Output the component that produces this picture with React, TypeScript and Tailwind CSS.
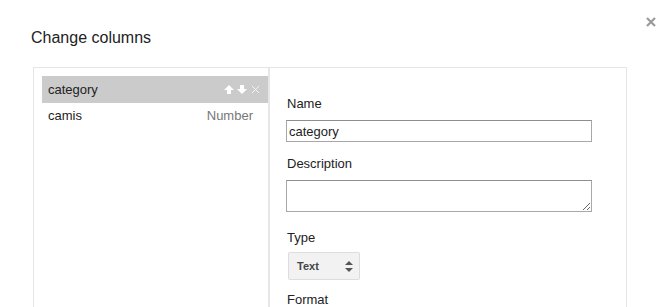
import React from "react";

function UpArrow() {
  return (
    <svg width="10" height="9" viewBox="0 0 10 9" className="block">
      <path d="M5 0 L10 5 L7 5 L7 9 L3 9 L3 5 L0 5 Z" fill="#fff" />
    </svg>
  );
}

function DownArrow() {
  return (
    <svg width="10" height="9" viewBox="0 0 10 9" className="block">
      <path d="M3 0 L7 0 L7 4 L10 4 L5 9 L0 4 L3 4 Z" fill="#fff" />
    </svg>
  );
}

export default function App() {
  const font = { fontFamily: '"Liberation Sans", Arial, sans-serif' };
  return (
    <div className="relative w-[671px] h-[307px] overflow-hidden bg-white text-[#222]" style={font}>
      {/* close */}
      <button className="absolute left-[645px] top-[16px] w-[12px] h-[12px]">
        <svg width="12" height="12" viewBox="0 0 12 12" className="block">
          <path d="M2 2 L10 10 M10 2 L2 10" stroke="#9a9a9a" strokeWidth="2.2" />
        </svg>
      </button>

      <div className="pt-[28px] pl-[31px] text-[16px] leading-[20px]">Change columns</div>

      <div className="mt-[19px] ml-[33px] w-[594px] h-[260px] border border-[#e5e5e5] flex">
        {/* column list */}
        <div className="w-[236px] shrink-0 border-r-2 border-[#e6e6e6] pt-[8px] pl-[8px]">
          <div className="h-[27px] bg-[#cbcbcb] flex items-center pl-[6px] pr-[8px] text-[13px]">
            <span className="flex-1">category</span>
            <div className="flex items-center gap-[3px]">
              <UpArrow />
              <DownArrow />
              <svg width="9" height="9" viewBox="0 0 9 9" className="block ml-[1px]">
                <path d="M1 1 L8 8 M8 1 L1 8" stroke="#f4f4f4" strokeWidth="1" />
              </svg>
            </div>
          </div>
          <div className="h-[26px] flex items-center pl-[6px] pr-[15px] text-[13px]">
            <span className="flex-1">camis</span>
            <span className="text-[#777]">Number</span>
          </div>
        </div>

        {/* editor */}
        <div className="flex-1 pt-[28px] pl-[16px] text-[13px]">
          <div className="leading-[16px] pl-[1px]">Name</div>
          <input
            defaultValue="category"
            className="mt-[8px] block w-[306px] h-[22px] border border-[#a8a8a8] border-t-[#8e8e8e] px-[2px] text-[13px] text-[#222] outline-none"
            style={font}
          />
          <div className="mt-[14px] leading-[16px] pl-[1px]">Description</div>
          <textarea
            className="mt-[8px] block w-[306px] h-[32px] border border-[#a8a8a8] border-t-[#8e8e8e] outline-none resize"
            style={font}
          />
          <div className="mt-[18px] leading-[16px] pl-[1px]">Type</div>
          <div className="mt-[6px] ml-[2px] w-[72px] h-[28px] bg-[#f2f2f2] border border-[#dcdcdc] rounded-[2px] flex items-center pl-[8px] pr-[6px]">
            <span className="flex-1 text-[11px] font-bold text-[#444]">Text</span>
            <svg width="8" height="11" viewBox="0 0 8 11" className="block">
              <path d="M4 0 L8 4 L0 4 Z M0 7 L8 7 L4 11 Z" fill="#555" />
            </svg>
          </div>
          <div className="mt-[12px] leading-[16px] pl-[1px]">Format</div>
        </div>
      </div>
    </div>
  );
}
